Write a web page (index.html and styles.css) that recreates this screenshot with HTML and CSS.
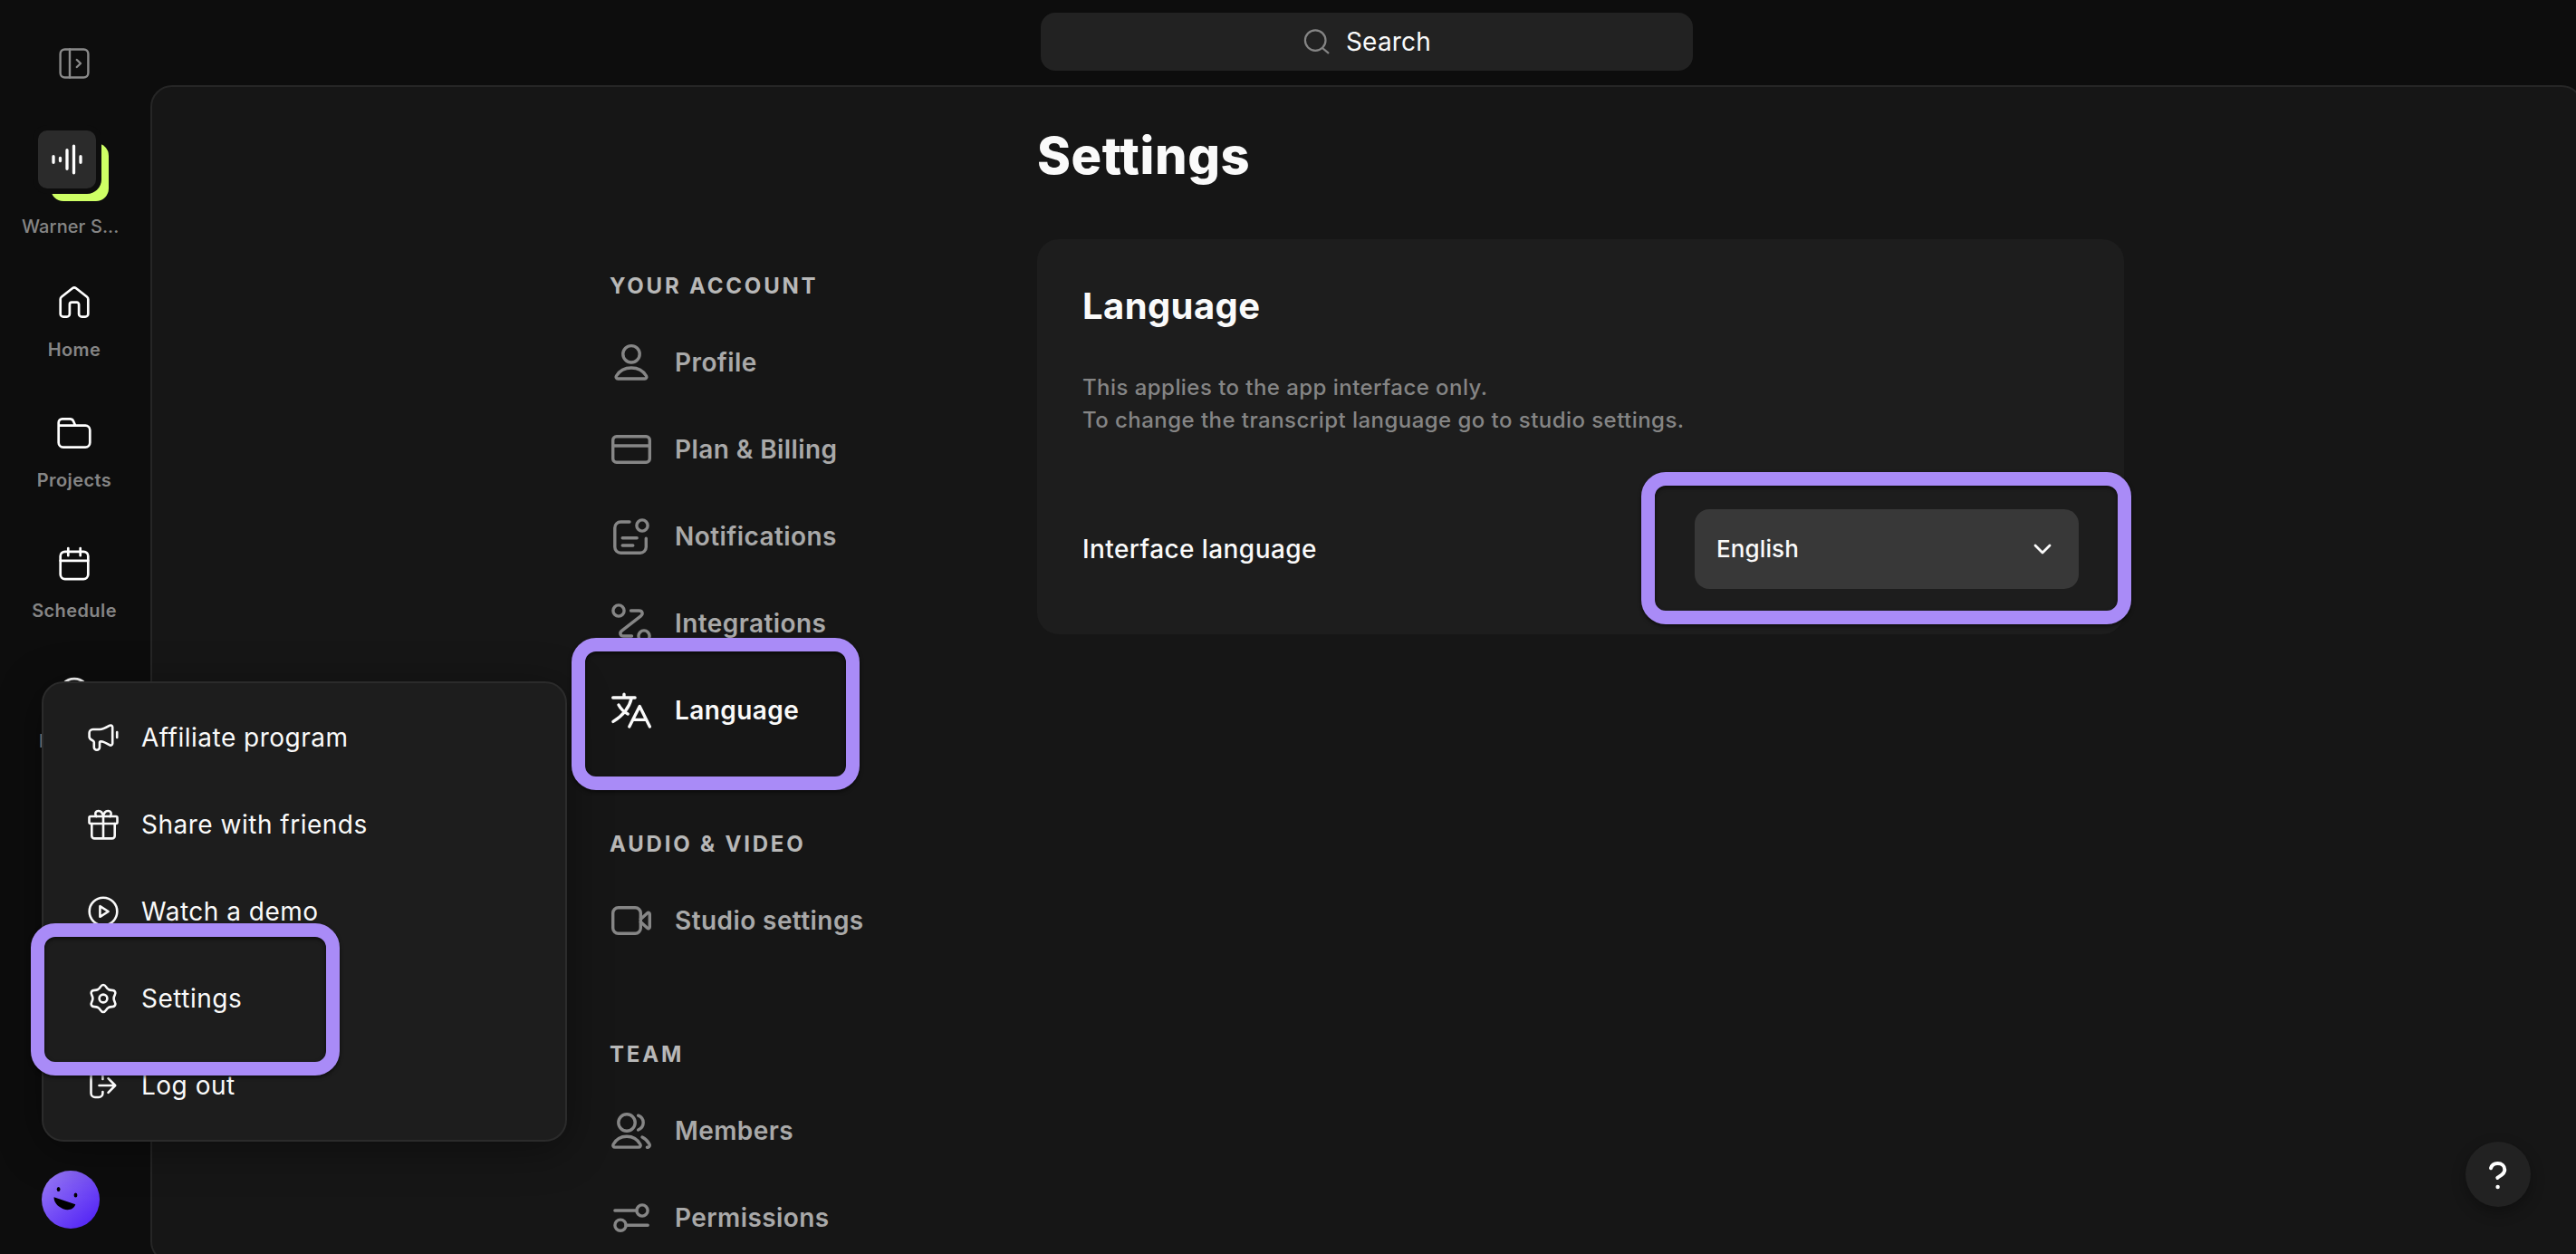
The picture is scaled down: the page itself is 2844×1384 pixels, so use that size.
FILE: index.html
```html
<!DOCTYPE html>
<html lang="en">
<head>
    <meta charset="UTF-8" />
    <meta name="viewport" content="width=device-width, initial-scale=1.0"/>
    <title>Settings - Language</title>
    <link rel="stylesheet" href="styles.css">
</head>
<body>
    <aside class="sidebar">
        <button class="toggle" aria-label="Expand sidebar">
            <svg width="40" height="40" viewBox="0 0 40 40"><rect x="4.6" y="4.5" width="30.8" height="31" rx="5"/><path d="M15 4.5v31M22.8 16l4.2 4-4.2 4"/></svg>
        </button>
        <a class="workspace" href="#">
            <span class="workspace-stack">
                <span class="workspace-tile">
                    <svg width="64" height="64" viewBox="0 0 64 64"><path d="M17 28.7v6.6M24.5 30.5v3M32 21.7v20.6M39.5 17.2v29.6M47 28.7v6.6"/></svg>
                </span>
            </span>
            <span class="workspace-name">Warner S...</span>
        </a>
        <nav class="side-nav">
            <a href="#">
                <svg width="40" height="40" viewBox="0 0 40 40"><path d="M4.7 16.2v16.2a3.2 3.2 0 0 0 3.2 3.2h3.8a3.2 3.2 0 0 0 3.2-3.2V22a2.3 2.3 0 0 1 2.3-2.3h5.6a2.3 2.3 0 0 1 2.3 2.3v10.4a3.2 3.2 0 0 0 3.2 3.2h3.8a3.2 3.2 0 0 0 3.2-3.2V16.2c0-1.2-.5-2-1.4-2.7L21.8 4c-1-.8-2.6-.8-3.6 0L6.1 13.5c-.9.7-1.4 1.5-1.4 2.7z"/></svg>
                Home
            </a>
            <a href="#">
                <svg width="40" height="40" viewBox="0 0 40 40"><path d="M2.7 11.7V8.4a4 4 0 0 1 4-4h8.6a4 4 0 0 1 3.7 2.4l2.2 4.9M2.7 11.7h29.6a5 5 0 0 1 5 5v13.9a5 5 0 0 1-5 5H7.7a5 5 0 0 1-5-5z"/></svg>
                Projects
            </a>
            <a href="#">
                <svg width="40" height="40" viewBox="0 0 40 40"><rect x="4.7" y="6.8" width="30.6" height="30.3" rx="5"/><path d="M4.7 16.8h30.6M13.3 3v8.2M26.7 3v8.2"/></svg>
                Schedule
            </a>
            <a href="#">
                <svg width="40" height="40" viewBox="0 0 40 40"><circle cx="20" cy="20" r="16.8"/><circle cx="20" cy="20" r="6"/></svg>
                Hosting
            </a>
        </nav>
        <svg class="avatar" width="64" height="64" viewBox="0 0 64 64">
            <defs>
                <linearGradient id="avatarFill" x1="0.15" y1="0.1" x2="0.85" y2="0.9">
                    <stop offset="0" stop-color="#9272f6"/>
                    <stop offset="1" stop-color="#5527f5"/>
                </linearGradient>
            </defs>
            <circle cx="32" cy="32" r="32" fill="url(#avatarFill)"/>
            <ellipse cx="18.6" cy="20.6" rx="1.9" ry="2.5"/>
            <ellipse cx="37.5" cy="27" rx="1.9" ry="2.5"/>
            <path d="M13.6 29.3l23.7 8c-2 5.8-8.2 7.2-13.6 4.9-6.2-2.6-10.4-7.4-10.1-12.9z"/>
        </svg>
    </aside>

    <div class="content">
        <header class="topbar">
            <div class="search">
                <svg width="32" height="32" viewBox="0 0 32 32"><circle cx="14.2" cy="14.6" r="11.3"/><path d="M22 23l6.4 5.4"/></svg>
                <span>Search</span>
            </div>
        </header>

        <main class="panel">
            <nav class="settings-nav">
                <section>
                    <h3>YOUR ACCOUNT</h3>
                    <a href="#">
                        <svg width="48" height="48" viewBox="0 0 48 48"><circle cx="24" cy="14.8" r="9.2"/><path d="M24 30c7.6 0 13.4 3.6 16.6 9 .8 1.4-.1 3-1.7 3H9.1c-1.6 0-2.5-1.6-1.7-3C10.6 33.6 16.4 30 24 30z"/></svg>
                        Profile
                    </a>
                    <a href="#">
                        <svg width="48" height="48" viewBox="0 0 48 48"><rect x="3.7" y="9.7" width="40.6" height="28.6" rx="4"/><path d="M3.7 20h40.6"/></svg>
                        Plan &amp; Billing
                    </a>
                    <a href="#">
                        <svg width="48" height="48" viewBox="0 0 48 48"><path d="M22 8h-9.7a6.5 6.5 0 0 0-6.5 6.5v21.3a6.5 6.5 0 0 0 6.5 6.5h21.5a6.5 6.5 0 0 0 6.5-6.5v-9.6M14.2 25.7h16M14.2 34h11.6"/><circle cx="36" cy="12" r="6.1"/></svg>
                        Notifications
                    </a>
                    <a href="#">
                        <svg width="48" height="48" viewBox="0 0 48 48"><circle cx="10" cy="10" r="6.1"/><circle cx="38" cy="38" r="6.1"/><path d="M23.5 10h9c3.8 0 4.8 3.6 2 5.8L13.5 32.2c-2.8 2.2-1.8 5.8 2 5.8h9"/></svg>
                        Integrations
                    </a>
                    <a href="#" class="active">
                        <svg width="48" height="48" viewBox="0 0 48 48"><path d="M3.7 10h24.4M16 6.2V10M24.2 10.6C21.6 21.6 14 30.2 3.9 36.4M10 18c2.4 4.4 5.8 7.8 10.2 10M21.8 42L33.2 19.6 44.4 42M26 34.4h14.4"/></svg>
                        Language
                    </a>
                </section>
                <section>
                    <h3>AUDIO &amp; VIDEO</h3>
                    <a href="#">
                        <svg width="48" height="48" viewBox="0 0 48 48"><rect x="3.7" y="9.7" width="30.6" height="28.6" rx="6"/><path d="M34.3 22.4l7.4-6.7c1-.9 2.6-.2 2.6 1.1v14.4c0 1.3-1.6 2-2.6 1.1l-7.4-6.7"/></svg>
                        Studio settings
                    </a>
                </section>
                <section>
                    <h3>TEAM</h3>
                    <a href="#">
                        <svg width="48" height="48" viewBox="0 0 48 48"><circle cx="19" cy="15" r="9.2"/><path d="M19 30.2c6.8 0 12 3.4 14.9 8.8.8 1.5-.1 3.1-1.8 3.1H5.9c-1.7 0-2.6-1.6-1.8-3.1C7 33.6 12.2 30.2 19 30.2zM31.6 7.2c3.6 1.4 5.6 4.3 5.6 7.9s-2 6.4-5.6 7.9M36 31c3.6 1.8 6.3 4.5 8 7.7.7 1.4.2 2.9-1.3 3.5h-1.3"/></svg>
                        Members
                    </a>
                    <a href="#">
                        <svg width="48" height="48" viewBox="0 0 48 48"><circle cx="36" cy="16" r="6.1"/><circle cx="12" cy="32.2" r="6.1"/><path d="M5.9 16h24M18 32.2h24.2"/></svg>
                        Permissions
                    </a>
                </section>
            </nav>

            <div class="settings-body">
                <h1>Settings</h1>
                <div class="card">
                    <h2>Language</h2>
                    <p>This applies to the app interface only.<br>To change the transcript language go to studio settings.</p>
                    <div class="field">
                        <span class="field-label">Interface language</span>
                        <div class="select">
                            <span>English</span>
                            <svg width="32" height="32" viewBox="0 0 32 32"><path d="M8 12l8 8 8-8"/></svg>
                        </div>
                    </div>
                </div>
            </div>
        </main>
    </div>

    <div class="user-menu">
        <a href="#">
            <svg width="36" height="36" viewBox="0 0 36 36"><path d="M6.5 9h7.6c3.8 0 7.2-2.1 10.6-4.1 1.6-.9 3.5 0 3.5 1.7v17.9c0 1.8-1.8 2.6-3.4 1.7-2.4-1.5-6.4-3.7-9.6-3.9a1.2 1.2 0 0 0-1.2 1.2v5.2a3.1 3.1 0 0 1-6.2 0v-5.5c0-.8-.5-1.2-1.2-1.7C3.7 20.2 2.6 19 2.6 17.2V13A4 4 0 0 1 6.5 9zM33.2 12v6"/></svg>
            Affiliate program
        </a>
        <a href="#">
            <svg width="36" height="36" viewBox="0 0 36 36"><rect x="2.5" y="9" width="31" height="8" rx="1.5"/><path d="M5.3 17v13.4a3 3 0 0 0 3 3h19.4a3 3 0 0 0 3-3V17M18 9v24.4M18 9c-.6-3.6-2.4-6-5.2-6-3.6 0-4.6 3.8-2.4 6M18 9c.6-3.6 2.4-6 5.2-6 3.6 0 4.6 3.8 2.4 6"/></svg>
            Share with friends
        </a>
        <a href="#">
            <svg width="36" height="36" viewBox="0 0 36 36"><circle cx="18" cy="18" r="15.3"/><path d="M14.4 12.2v11.6l9.2-5.8z"/></svg>
            Watch a demo
        </a>
        <a href="#">
            <svg width="36" height="36" viewBox="0 0 36 36"><path d="M18 3C21.2 3 20.5 6 23.8 8C27.1 9.8 29.4 7.7 31 10.5C32.6 13.3 29.6 14.2 29.6 18C29.6 21.8 32.6 22.7 31 25.5C29.4 28.3 27.1 26.2 23.8 28C20.5 30 21.2 33 18 33C14.8 33 15.5 30 12.2 28C8.9 26.2 6.6 28.3 5 25.5C3.4 22.7 6.4 21.8 6.4 18C6.4 14.2 3.4 13.3 5 10.5C6.6 7.7 8.9 9.8 12.2 8C15.5 6 14.8 3 18 3z"/><circle cx="18" cy="18" r="4.4"/></svg>
            Settings
        </a>
        <a href="#">
            <svg width="36" height="36" viewBox="0 0 36 36"><path d="M17.4 11V8a4.5 4.5 0 0 0-4.5-4.5H9A4.5 4.5 0 0 0 4.5 8v18.5A4.5 4.5 0 0 0 9 31h3.9a4.5 4.5 0 0 0 4.5-4.5V25M13.5 18H31M23.5 10.2L31.2 18l-7.7 7.8"/></svg>
            Log out
        </a>
    </div>

    <button class="help" aria-label="Help">
        <svg width="72" height="72" viewBox="0 0 72 72"><path d="M28 29.2c.9-3.3 3.8-5.3 7.4-5.3 4.6 0 7.9 2.9 7.9 7.1 0 5-4.6 6.1-8 8.9"/><circle cx="35.6" cy="50" r="2.2"/></svg>
    </button>

    <!-- tutorial highlights -->
    <div class="highlight highlight-nav"></div>
    <div class="highlight highlight-menu"></div>
    <div class="highlight highlight-select"></div>
</body>
</html>
```
FILE: styles.css
```css
:root {
    --bg: #0d0d0d;
    --panel-bg: #161616;
    --card-bg: #1d1d1d;
    --field-bg: #383838;
    --border: #262626;
    --text: #fafafa;
    --text-soft: #a9a9a9;
    --text-muted: #858585;
    --lime: #ceff65;
    --highlight: #a98bf7;
}
* {
    box-sizing: border-box;
}
body {
    font-family: 'Inter', sans-serif;
    background-color: var(--bg);
    color: var(--text);
    margin: 0;
    height: 1384px;
    display: flex;
    position: relative;
    overflow: hidden;
}
a {
    color: inherit;
    text-decoration: none;
}
button {
    border: 0;
    padding: 0;
    background: none;
}
svg {
    display: block;
    flex-shrink: 0;
    fill: none;
    stroke: currentColor;
    stroke-linecap: round;
    stroke-linejoin: round;
}

/* Sidebar */
.sidebar {
    width: 166px;
    flex-shrink: 0;
    display: flex;
    flex-direction: column;
    align-items: center;
    padding: 50px 2px 28px 0;
}
.toggle {
    color: #8a8a8a;
    margin-bottom: 54px;
}
.toggle svg { stroke-width: 2.4; }
.workspace {
    display: flex;
    flex-direction: column;
    width: 116px;
}
.workspace-stack {
    position: relative;
    width: 78px;
    height: 78px;
    margin-left: 18px;
}
.workspace-stack::before {
    content: "";
    position: absolute;
    right: 0;
    bottom: 0;
    width: 64px;
    height: 64px;
    border-radius: 14px;
    background-color: var(--lime);
}
.workspace-tile {
    position: absolute;
    top: 0;
    left: 0;
    border-radius: 10px;
    background-color: #2b2b2b;
    box-shadow: 0 0 0 6px var(--bg);
    color: #fff;
}
.workspace-tile svg { stroke-width: 3.3; }
.workspace-name {
    margin-top: 16px;
    font-size: 20px;
    font-weight: 500;
    line-height: 24px;
    letter-spacing: 0.1px;
    color: var(--text-muted);
    white-space: nowrap;
}
.side-nav {
    margin-top: 52px;
    display: flex;
    flex-direction: column;
    gap: 60px;
}
.side-nav a {
    display: flex;
    flex-direction: column;
    align-items: center;
    gap: 20px;
    font-size: 20px;
    font-weight: 600;
    line-height: 24px;
    letter-spacing: 0.4px;
    color: var(--text-muted);
}
.side-nav svg {
    color: #fff;
    stroke-width: 2.7;
}
.avatar {
    margin-top: auto;
    margin-left: 46px;
    align-self: flex-start;
    fill: #000;
    stroke: none;
}

/* Main area, runs slightly past the window edge */
.content {
    flex: 0 0 calc(100% - 158px);
    display: flex;
    flex-direction: column;
    height: 1388px;
}
.topbar {
    height: 94px;
    flex-shrink: 0;
    padding-top: 14px;
    display: flex;
    justify-content: center;
}
.search {
    width: 720px;
    height: 64px;
    border-radius: 16px;
    background-color: #222;
    display: flex;
    align-items: center;
    justify-content: center;
    gap: 16px;
    font-size: 28px;
    letter-spacing: 0.2px;
}
.search svg {
    color: #858585;
    stroke-width: 2.2;
}
.panel {
    flex-grow: 1;
    display: flex;
    justify-content: center;
    padding-top: 42px;
    border: 2px solid var(--border);
    border-radius: 24px;
    background-color: var(--panel-bg);
}
.settings-nav {
    width: 472px;
    padding-top: 160px;
    display: flex;
    flex-direction: column;
    gap: 82px;
}
.settings-nav h3 {
    margin: 0 0 18px;
    font-size: 24px;
    font-weight: 700;
    line-height: 36px;
    letter-spacing: 2.8px;
    color: #b8b8b8;
}
.settings-nav a {
    height: 96px;
    display: flex;
    align-items: center;
    gap: 24px;
    font-size: 28px;
    font-weight: 600;
    letter-spacing: 0.42px;
    color: var(--text-soft);
}
.settings-nav svg {
    color: #868686;
    stroke-width: 3.4;
}
.settings-nav .active,
.settings-nav .active svg {
    color: var(--text);
}

/* Settings content */
.settings-body {
    width: 1200px;
}
.settings-body h1 {
    margin: 0 0 58px;
    font-size: 56px;
    font-weight: 800;
    line-height: 68px;
    letter-spacing: 0.6px;
}
.card {
    padding: 50px;
    border-radius: 24px;
    background-color: var(--card-bg);
}
.card h2 {
    margin: 0 0 48px;
    font-size: 40px;
    font-weight: 700;
    line-height: 48px;
    letter-spacing: 0.4px;
}
.card p {
    margin: 0 0 80px;
    font-size: 24px;
    font-weight: 500;
    line-height: 36px;
    letter-spacing: 0.45px;
    color: var(--text-muted);
}
.field {
    display: flex;
    align-items: center;
    justify-content: space-between;
}
.field-label {
    font-size: 28px;
    font-weight: 500;
    letter-spacing: 0.42px;
}
.select {
    width: 424px;
    height: 88px;
    padding: 0 24px;
    border-radius: 16px;
    background-color: var(--field-bg);
    display: flex;
    align-items: center;
    justify-content: space-between;
    font-size: 26px;
    font-weight: 500;
    letter-spacing: 0.1px;
}
.select span { padding-bottom: 2px; }
.select svg { stroke-width: 2.8; }

/* User menu popup */
.user-menu {
    position: absolute;
    left: 46px;
    top: 752px;
    width: 580px;
    padding: 12px 0 12px 48px;
    border: 2px solid #2b2b2b;
    border-radius: 24px;
    background-color: var(--card-bg);
    box-shadow: 0 8px 48px rgba(0, 0, 0, 0.4);
}
.user-menu a {
    height: 96px;
    display: flex;
    align-items: center;
    gap: 24px;
    font-size: 28px;
    letter-spacing: 0.5px;
}
.user-menu svg { stroke-width: 2.6; }

.help {
    position: absolute;
    right: 50px;
    bottom: 52px;
    border-radius: 50%;
    background-color: #222;
    color: #fff;
    box-shadow: 0 6px 16px rgba(0, 0, 0, 0.3);
}
.help svg { stroke-width: 4; }
.help circle {
    fill: currentColor;
    stroke: none;
}

.highlight {
    position: absolute;
    border: 15px solid var(--highlight);
    border-radius: 27px;
    box-shadow: 0 2px 4px rgba(0, 0, 0, 0.6), inset 0 2px 4px rgba(0, 0, 0, 0.6);
}
.highlight-nav {
    left: 631px;
    top: 704px;
    width: 318px;
    height: 168px;
}
.highlight-menu {
    left: 34px;
    top: 1019px;
    width: 341px;
    height: 168px;
}
.highlight-select {
    left: 1812px;
    top: 521px;
    width: 541px;
    height: 168px;
}
```
